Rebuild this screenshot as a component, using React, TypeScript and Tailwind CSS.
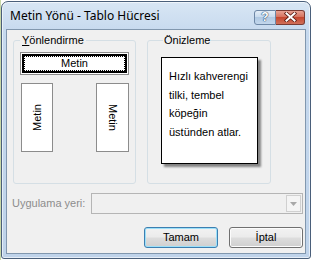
export default function App() {
  const f = { fontFamily: '"Liberation Sans", Arial, sans-serif' };
  return (
    <div className="w-[313px] h-[260px] bg-white overflow-hidden flex" style={f}>
      <div className="w-[1px] h-full bg-[#c8d8a8]" />
      <div className="mt-[1px] w-[310px] h-[258px] rounded-t-[7px] rounded-b-[3px] border border-[#4a5f7a] bg-[linear-gradient(180deg,#d8e6f4_0%,#c6d9ee_12%,#bfd3ea_100%)] flex flex-col shadow-[inset_0_0_0_1px_rgba(255,255,255,0.6)]">
        <div className="h-[27px] flex items-center justify-between pl-[8px] pr-[5px] shrink-0">
          <span className="text-black" style={{ fontFamily: '"Noto Sans", sans-serif', fontSize: '12px' }}>Metin Yönü - Tablo Hücresi</span>
          <div className="flex items-start mt-[3px]">
            <div className="w-[22px] h-[15px] rounded-l-[3px] border border-[#6d87a6] bg-[linear-gradient(180deg,#e3edf7_0%,#c9dbee_45%,#b0c9e3_50%,#c3d7ec_100%)] flex items-center justify-center">
              <span className="text-[12px] leading-none font-bold text-white [text-shadow:0_0_1px_#2b4a70,0_0_1px_#2b4a70,0_0_1px_#2b4a70]">?</span>
            </div>
            <div className="w-[29px] h-[15px] rounded-r-[3px] border border-l-0 border-[#7a3b33] bg-[linear-gradient(180deg,#e8a293_0%,#d6735f_45%,#c5472f_50%,#d0705a_100%)] flex items-center justify-center">
              <svg width="13" height="10" viewBox="0 0 13 10">
                <path d="M2.5 1.5 L10.5 8.5 M10.5 1.5 L2.5 8.5" stroke="#5a1c12" strokeWidth="3.6" strokeLinecap="square" />
                <path d="M2.5 1.5 L10.5 8.5 M10.5 1.5 L2.5 8.5" stroke="#ffffff" strokeWidth="2" strokeLinecap="square" />
              </svg>
            </div>
          </div>
        </div>
        <div className="mx-[4px] mb-[4px] flex-1 border border-[#8197ae] bg-[#f0f0f0] flex flex-col text-[11px] text-black">
          <div className="flex pt-[4px] pl-[6px] gap-[11px]">
            <fieldset className="w-[123px] h-[150px] border border-[#d5dfe5] rounded-[3px] px-[6px]">
              <legend className="ml-0 px-[2px] leading-[13px]"><span className="underline">Y</span>önlendirme</legend>
              <div className="mt-[5px] h-[23px] border border-[#8c8c8c] bg-white p-[1px]">
                <div className="h-full border-2 border-black bg-white">
                  <div className="h-full border border-dotted border-black flex items-center justify-center">
                    <span>Metin</span>
                  </div>
                </div>
              </div>
              <div className="mt-[8px] flex justify-between pl-[1px]">
                <div className="w-[32px] h-[69px] border border-[#8c8c8c] bg-white flex items-center justify-center">
                  <span className="[writing-mode:vertical-rl] rotate-180">Metin</span>
                </div>
                <div className="w-[33px] h-[69px] border border-[#8c8c8c] bg-white flex items-center justify-center">
                  <span className="[writing-mode:vertical-rl]">Metin</span>
                </div>
              </div>
            </fieldset>
            <fieldset className="w-[124px] h-[150px] border border-[#d5dfe5] rounded-[3px] pl-[13px]">
              <legend className="ml-[2px] px-[1px] leading-[13px]">Önizleme</legend>
              <div className="mt-[10px] w-[97px] h-[107px] border border-black bg-white shadow-[3px_3px_2px_rgba(0,0,0,0.45)] pl-[7px] pt-[9px] leading-[18.5px]">
                <div>Hızlı kahverengi</div>
                <div>tilki, tembel</div>
                <div>köpeğin</div>
                <div>üstünden atlar.</div>
              </div>
            </fieldset>
          </div>
          <div className="flex items-center mt-[9px] pl-[5px]">
            <span className="w-[79px] text-[#8d8d8d]">Uygulama yeri:</span>
            <div className="w-[212px] h-[21px] border border-[#b5b5b5] bg-[#f0f0f0] flex justify-end p-[1px]">
              <div className="w-[15px] h-full border border-[#d0d0d0] bg-[#f4f4f4] flex items-center justify-center">
                <svg width="7" height="4" viewBox="0 0 7 4"><path d="M0 0 H7 L3.5 4 Z" fill="#a8a8a8" /></svg>
              </div>
            </div>
          </div>
          <div className="flex justify-end gap-[11px] mt-[13px] pr-[2px]">
            <button className="w-[74px] h-[21px] rounded-[3px] border border-[#3c7fb1] bg-[linear-gradient(180deg,#f2f2f2_0%,#ebebeb_48%,#dddddd_52%,#cfcfcf_100%)] shadow-[inset_0_0_0_1px_#9ce0f9] text-[11px] text-black">Tamam</button>
            <button className="w-[74px] h-[21px] rounded-[3px] border border-[#707070] bg-[linear-gradient(180deg,#f2f2f2_0%,#ebebeb_48%,#dddddd_52%,#cfcfcf_100%)] shadow-[inset_0_0_0_1px_#fcfcfc] text-[11px] text-black">İptal</button>
          </div>
        </div>
      </div>
    </div>
  );
}
